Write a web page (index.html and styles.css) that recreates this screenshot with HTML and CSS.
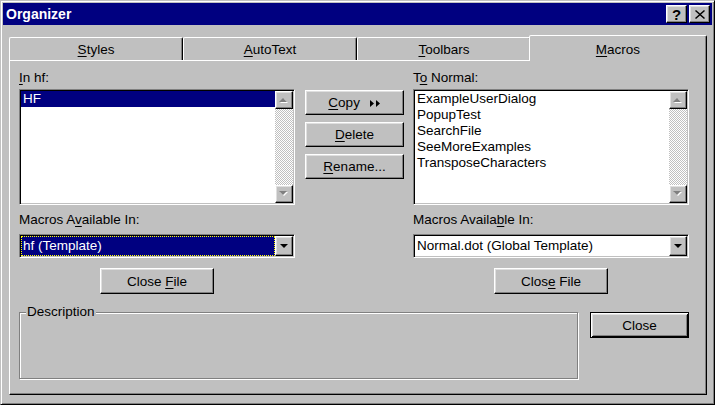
FILE: index.html
```html
<!DOCTYPE html>
<html lang="en">
<head>
    <meta charset="UTF-8">
    <title>Organizer</title>
    <link rel="stylesheet" href="styles.css">
</head>
<body>
    <div class="window">
        <div class="titlebar">
            <span class="title">Organizer</span>
            <div class="title-buttons">
                <button class="tbtn raised">?</button>
                <button class="tbtn raised">
                    <svg width="10" height="9" viewBox="0 0 10 9"><path d="M1 0 L5 3.5 L9 0 L10 1 L6 4.5 L10 8 L9 9 L5 5.5 L1 9 L0 8 L4 4.5 L0 1Z" fill="#000"/></svg>
                </button>
            </div>
        </div>

        <div class="tabs">
            <div class="tab"><u>S</u>tyles</div>
            <div class="tab"><u>A</u>utoText</div>
            <div class="tab"><u>T</u>oolbars</div>
            <div class="tab active"><u>M</u>acros</div>
        </div>

        <div class="panel">
            <div class="organizer">
                <div class="side">
                    <div class="label"><u>I</u>n hf:</div>
                    <div class="listbox">
                        <ul class="items">
                            <li class="selected">HF</li>
                        </ul>
                        <div class="scrollbar">
                            <div class="sb-btn raised">
                                <svg width="10" height="6" viewBox="0 0 10 6"><path d="M1 6 L5 2 L9 6Z" fill="#fff"/><path d="M0 5 L4 1 L8 5Z" fill="#808080"/></svg>
                            </div>
                            <div class="sb-btn raised">
                                <svg width="10" height="6" viewBox="0 0 10 6"><path d="M1 1 L9 1 L5 5Z" fill="#fff"/><path d="M0 0 L8 0 L4 4Z" fill="#808080"/></svg>
                            </div>
                        </div>
                    </div>
                    <div class="label label-combo">Macros A<u>v</u>ailable In:</div>
                    <div class="combo">
                        <div class="combo-value focused">hf (Template)</div>
                        <div class="combo-arrow raised">
                            <svg width="8" height="4" viewBox="0 0 8 4"><path d="M0 0 H8 L4 4Z" fill="#000"/></svg>
                        </div>
                    </div>
                    <button class="btn btn-file">Close <u>F</u>ile</button>
                </div>

                <div class="actions">
                    <button class="btn"><u>C</u>opy <svg class="arrows" width="11" height="7" viewBox="0 0 11 7"><path d="M0 0 L4 3.5 L0 7Z M6 0 L10 3.5 L6 7Z" fill="#000"/></svg></button>
                    <button class="btn"><u>D</u>elete</button>
                    <button class="btn"><u>R</u>ename...</button>
                </div>

                <div class="side">
                    <div class="label">T<u>o</u> Normal:</div>
                    <div class="listbox">
                        <ul class="items">
                            <li>ExampleUserDialog</li>
                            <li>PopupTest</li>
                            <li>SearchFile</li>
                            <li>SeeMoreExamples</li>
                            <li>TransposeCharacters</li>
                        </ul>
                        <div class="scrollbar">
                            <div class="sb-btn raised">
                                <svg width="10" height="6" viewBox="0 0 10 6"><path d="M1 6 L5 2 L9 6Z" fill="#fff"/><path d="M0 5 L4 1 L8 5Z" fill="#808080"/></svg>
                            </div>
                            <div class="sb-btn raised">
                                <svg width="10" height="6" viewBox="0 0 10 6"><path d="M1 1 L9 1 L5 5Z" fill="#fff"/><path d="M0 0 L8 0 L4 4Z" fill="#808080"/></svg>
                            </div>
                        </div>
                    </div>
                    <div class="label label-combo">Macros Availa<u>b</u>le In:</div>
                    <div class="combo">
                        <div class="combo-value">Normal.dot (Global Template)</div>
                        <div class="combo-arrow raised">
                            <svg width="8" height="4" viewBox="0 0 8 4"><path d="M0 0 H8 L4 4Z" fill="#000"/></svg>
                        </div>
                    </div>
                    <button class="btn btn-file">Clos<u>e</u> File</button>
                </div>
            </div>

            <div class="bottom">
                <fieldset class="description">
                    <legend>Description</legend>
                </fieldset>
                <button class="btn btn-default">Close</button>
            </div>
        </div>
    </div>
</body>
</html>
```

FILE: styles.css
```css
body {
    margin: 0;
    background-color: #c0c0c0;
    font-family: "Liberation Sans", Arial, sans-serif;
    font-size: 13.5px;
    color: #000;
}

u {
    text-underline-offset: 2px;
}

.raised {
    box-sizing: border-box;
    background-color: #c0c0c0;
    border: 1px solid;
    border-color: #fff #000 #000 #fff;
    box-shadow: inset -1px -1px 0 #808080, inset 1px 1px 0 #dfdfdf;
}

.window {
    width: 715px;
    height: 405px;
    box-sizing: border-box;
    padding: 2px;
    background-color: #c0c0c0;
    border: 1px solid;
    border-color: #c0c0c0 #000 #000 #c0c0c0;
    box-shadow: inset 1px 1px 0 #fff, inset -1px -1px 0 #808080;
}

.titlebar {
    height: 22px;
    display: flex;
    align-items: center;
    justify-content: space-between;
    padding: 0 2px 0 2px;
    background-color: #000080;
    color: #fff;
}

.title {
    font-weight: bold;
    font-size: 14px;
    padding-left: 1px;
}

.title-buttons {
    display: flex;
    gap: 2px;
}

.tbtn {
    width: 21px;
    height: 18px;
    padding: 0;
    display: flex;
    align-items: center;
    justify-content: center;
    font-family: "Liberation Sans", Arial, sans-serif;
    font-weight: bold;
    font-size: 15px;
    line-height: 1;
    color: #000;
}

/* tabs */
.tabs {
    display: flex;
    align-items: flex-start;
    height: 26px;
    margin: 10px 5px 0 6px;
}

.tab {
    width: 174px;
    height: 23px;
    margin-top: 2px;
    box-sizing: border-box;
    padding-top: 4px;
    line-height: 16px;
    text-align: center;
    border: 1px solid;
    border-bottom: none;
    border-color: #fff #000 transparent #fff;
    border-radius: 2px 2px 0 0;
    box-shadow: inset -1px 0 0 #808080;
}

.tab.active {
    position: relative;
    z-index: 1;
    width: 178px;
    height: 26px;
    margin-top: 0;
    margin-left: -2px;
    padding-top: 6px;
    background-color: #c0c0c0;
}

.panel {
    height: 335px;
    margin: -1px 5px 0 6px;
    box-sizing: border-box;
    padding: 9px 0 0 9px;
    border: 1px solid;
    border-color: #fff #000 #000 #fff;
    box-shadow: inset -1px -1px 0 #808080;
}

.organizer {
    display: flex;
}

.side {
    width: 276px;
    display: flex;
    flex-direction: column;
}

.label {
    height: 16px;
    line-height: 16px;
    margin-bottom: 3px;
}

.label-combo {
    margin-top: 7px;
    margin-bottom: 6px;
}

.listbox {
    height: 116px;
    box-sizing: border-box;
    display: flex;
    padding: 1px;
    background-color: #fff;
    border: 1px solid;
    border-color: #808080 #fff #fff #808080;
    box-shadow: inset 1px 1px 0 #000, inset -1px -1px 0 #c0c0c0;
}

.items {
    flex: 1;
    margin: 0;
    padding: 0;
    list-style: none;
}

.items li {
    line-height: 16px;
    padding-left: 2px;
}

.items li.selected {
    background-color: #000080;
    color: #fff;
}

.scrollbar {
    width: 18px;
    display: flex;
    flex-direction: column;
    justify-content: space-between;
    background: repeating-conic-gradient(#fff 0 25%, #c0c0c0 0 50%) 0 0 / 2px 2px;
}

.sb-btn {
    height: 18px;
    display: flex;
    align-items: center;
    justify-content: center;
}

.combo {
    height: 24px;
    box-sizing: border-box;
    display: flex;
    padding: 1px;
    background-color: #fff;
    border: 1px solid;
    border-color: #808080 #fff #fff #808080;
    box-shadow: inset 1px 1px 0 #000, inset -1px -1px 0 #c0c0c0;
}

.combo-value {
    flex: 1;
    line-height: 20px;
    padding-left: 2px;
}

.combo-value.focused {
    background-color: #000080;
    color: #fff;
    outline: 1px dotted #ffff00;
    outline-offset: -1px;
}

.combo-arrow {
    width: 18px;
    display: flex;
    align-items: center;
    justify-content: center;
}

.btn {
    box-sizing: border-box;
    width: 99px;
    height: 25px;
    padding: 0;
    font: inherit;
    font-weight: normal;
    color: #000;
    background-color: #c0c0c0;
    border: 1px solid;
    border-color: #fff #000 #000 #fff;
    box-shadow: inset -1px -1px 0 #808080, inset 1px 1px 0 #dfdfdf;
}

.btn-file {
    align-self: center;
    width: 114px;
    height: 26px;
    margin-top: 10px;
}

.actions {
    display: flex;
    flex-direction: column;
    gap: 7px;
    margin: 0 9px 0 10px;
    padding-top: 20px;
}

.arrows {
    margin-left: 6px;
    vertical-align: 0;
}

.bottom {
    display: flex;
    align-items: flex-start;
    margin-top: 10px;
}

.description {
    width: 559px;
    height: 75px;
    box-sizing: border-box;
    margin: 0;
    padding: 0 6px;
    border: 1px solid #808080;
    box-shadow: 1px 1px 0 #fff, inset 1px 1px 0 #fff;
}

.description legend {
    padding: 0 1px;
    line-height: 16px;
    background-color: #c0c0c0;
}

.btn-default {
    height: 26px;
    margin: 8px 0 0 12px;
    border: 1px solid #000;
    box-shadow: inset 1px 1px 0 #fff, inset -1px -1px 0 #000, inset 2px 2px 0 #dfdfdf, inset -2px -2px 0 #808080;
}
```
